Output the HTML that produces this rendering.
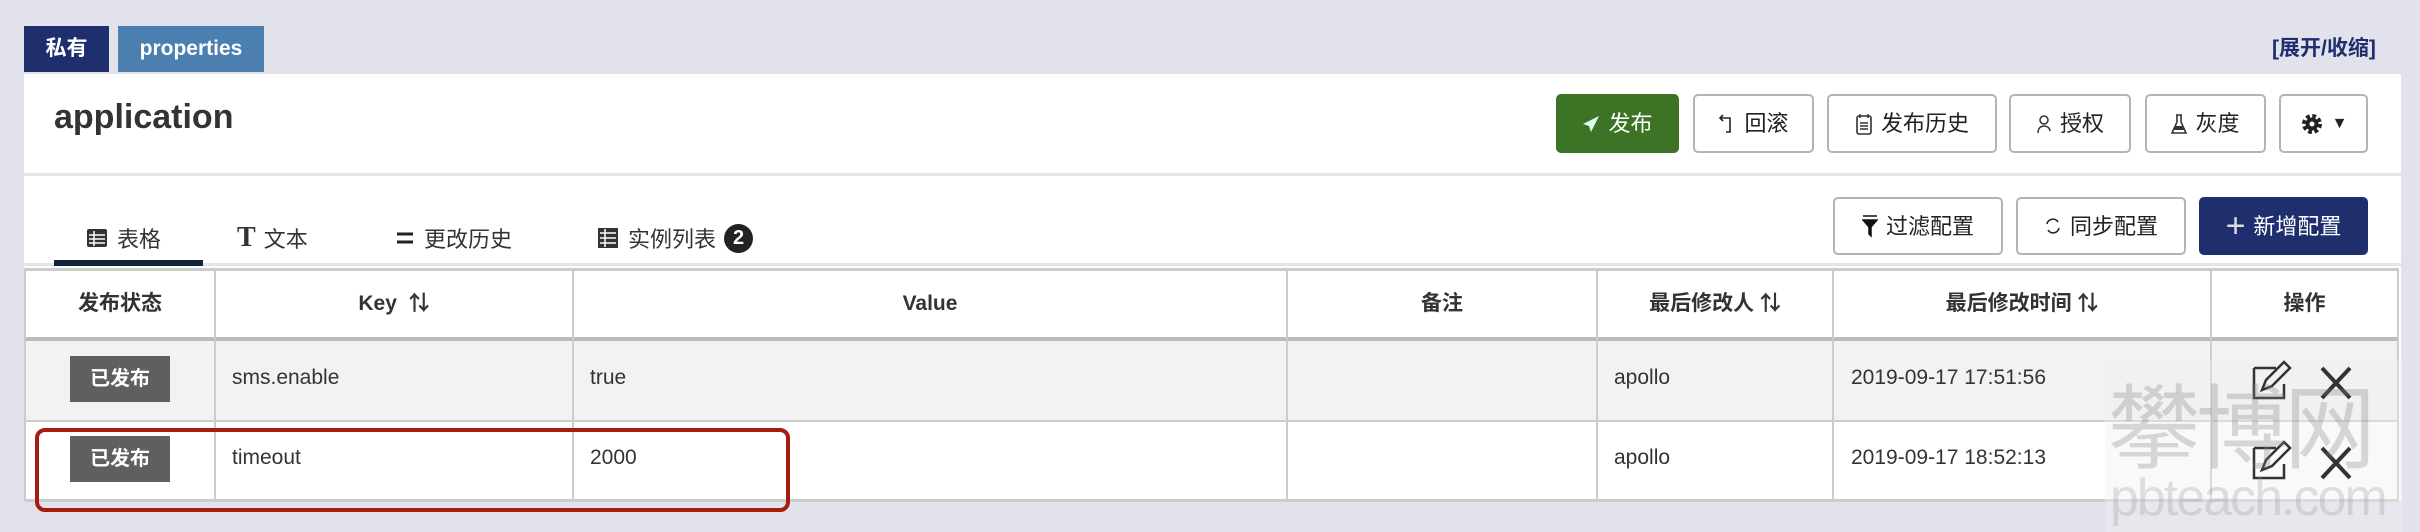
<!DOCTYPE html>
<html><head><meta charset="utf-8"><style>
*{box-sizing:border-box;margin:0;padding:0}
body{width:2420px;height:532px;background:#e1e2ec;font-family:"Liberation Sans","Noto Sans CJK SC",sans-serif;color:#333;position:relative;overflow:hidden}
.a{position:absolute}
.tag{top:26px;height:46px;color:#fff;font-size:21px;font-weight:bold;line-height:46px;text-align:center}
.panel{left:24px;top:74px;width:2377px;height:427px;background:#fff}
.btn{top:94px;height:59px;border:2px solid #b4b4b4;border-radius:5px;background:#fff;font-size:22px;line-height:55px;text-align:center;color:#222;display:flex;align-items:center;justify-content:center;gap:8px}
.btn2{top:197px;height:58px}
.hline{left:24px;width:2377px;height:3px;background:#e2e4ee}
.th{top:269px;height:70px;font-size:21px;font-weight:bold;line-height:70px;text-align:center;color:#333}
.v{width:2px;background:#ccc}
.cell{font-size:21px;color:#333}
.badge{left:70px;width:100px;height:46px;background:#5f5f5f;color:#fff;font-weight:bold;font-size:20px;line-height:46px;text-align:center}
.tab{top:222px;font-size:22px;color:#333;display:flex;align-items:center;gap:8px}
</style></head><body>
<div class="a tag" style="left:24px;width:85px;background:#1f2f6e">私有</div>
<div class="a tag" style="left:118px;width:146px;background:#4a7fb0">properties</div>
<div class="a" style="left:2272px;top:32px;font-size:21px;font-weight:bold;color:#1f2f6e">[展开/收缩]</div>

<div class="a panel"></div>
<div class="a" style="left:54px;top:98px;font-size:34px;font-weight:bold;color:#333">application</div>
<div class="a hline" style="top:173px"></div>
<div class="a hline" style="top:263px"></div>

<div class="a btn" style="left:1556px;width:123px;background:#3c7325;border-color:#3c7325;color:#fff">
<svg width="18" height="18" viewBox="0 0 18 18"><path d="M17 1L1 9l6 2 2 6z" fill="#dfe"/></svg>发布</div>
<div class="a btn" style="left:1693px;width:121px"><svg width="18" height="24" viewBox="0 0 18 24"><path d="M5 3L2 6l3 3M2 6h10v14H8" fill="none" stroke="#223" stroke-width="1.6"/></svg>回滚</div>
<div class="a btn" style="left:1827px;width:170px"><svg width="18" height="24" viewBox="0 0 18 24"><rect x="2" y="4" width="14" height="18" rx="2" fill="none" stroke="#333" stroke-width="1.6"/><path d="M5 2v4M13 2v4M5 11h8M5 14h8M5 17h8" stroke="#333" stroke-width="1.5"/></svg>发布历史</div>
<div class="a btn" style="left:2009px;width:122px"><svg width="16" height="20" viewBox="0 0 16 20"><circle cx="8" cy="6" r="4" fill="none" stroke="#333" stroke-width="1.5"/><path d="M2 19c0-5 3-7 6-7s6 2 6 5" fill="none" stroke="#333" stroke-width="1.5"/></svg>授权</div>
<div class="a btn" style="left:2145px;width:121px"><svg width="16" height="22" viewBox="0 0 16 22"><path d="M5 2h6M6 2v7L1 20h14L10 9V2" fill="none" stroke="#333" stroke-width="1.6"/><path d="M3 17h10l-2-4H5z" fill="#333"/></svg>灰度</div>
<div class="a btn" style="left:2279px;width:89px;font-size:16px"><svg width="24" height="24" viewBox="0 0 24 24"><circle cx="12" cy="12" r="7.5" fill="none" stroke="#222" stroke-width="5" stroke-dasharray="3.5 2.4"/><circle cx="12" cy="12" r="6.5" fill="#222"/><circle cx="12" cy="12" r="2.5" fill="#fff"/></svg>▼</div>

<div class="a tab" style="left:85px"><svg width="24" height="24" viewBox="0 0 24 24"><rect x="2" y="3" width="20" height="18" rx="2" fill="#333"/><path d="M4 9h16M4 13h16M4 17h16M9 5v15" stroke="#fff" stroke-width="1.5"/></svg>表格</div>
<div class="a" style="left:54px;top:260px;width:149px;height:6px;background:#14233c"></div>
<div class="a tab" style="left:237px"><span style="font-family:'Liberation Serif',serif;font-weight:bold;font-size:28px">T</span>文本</div>
<div class="a tab" style="left:394px"><svg width="22" height="20" viewBox="0 0 22 20"><path d="M3 6h16M3 14h16" stroke="#222" stroke-width="3"/></svg>更改历史</div>
<div class="a tab" style="left:596px"><svg width="24" height="24" viewBox="0 0 24 24"><rect x="2" y="2" width="20" height="20" fill="#333"/><path d="M4 7h16M4 12h16M4 17h16M9 3v18" stroke="#fff" stroke-width="1.5"/></svg>实例列表<span style="display:inline-block;width:29px;height:29px;border-radius:50%;background:#222;color:#fff;font-weight:bold;font-size:20px;line-height:29px;text-align:center">2</span></div>

<div class="a btn btn2" style="left:1833px;width:170px"><svg width="16" height="24" viewBox="0 0 16 24"><path d="M1 2h14M1 6h14L9 13v9l-2-2v-7z" stroke="#111" stroke-width="1.5" fill="#111"/></svg>过滤配置</div>
<div class="a btn btn2" style="left:2016px;width:170px"><svg width="18" height="22" viewBox="0 0 18 22"><path d="M3 9a6 6 0 0 1 11-2M15 13a6 6 0 0 1-11 2" fill="none" stroke="#222" stroke-width="1.6"/></svg>同步配置</div>
<div class="a btn btn2" style="left:2199px;width:169px;background:#1f2f6e;border-color:#1f2f6e;color:#fff"><span style="font-size:34px;font-weight:normal;line-height:30px;color:#ddd">+</span>新增配置</div>

<div class="a" style="left:25px;top:268px;width:2374px;height:3px;background:#ccc"></div>
<div class="a" style="left:25px;top:337px;width:2374px;height:4px;background:#bbb"></div>
<div class="a" style="left:25px;top:341px;width:2374px;height:80px;background:#f2f2f2"></div>
<div class="a" style="left:25px;top:420px;width:2374px;height:2px;background:#ccc"></div>
<div class="a" style="left:25px;top:499px;width:2374px;height:3px;background:#ccc"></div>
<div class="a v" style="left:24px;top:268px;height:233px"></div>
<div class="a v" style="left:214px;top:268px;height:233px"></div>
<div class="a v" style="left:572px;top:268px;height:233px"></div>
<div class="a v" style="left:1286px;top:268px;height:233px"></div>
<div class="a v" style="left:1596px;top:268px;height:233px"></div>
<div class="a v" style="left:1832px;top:268px;height:233px"></div>
<div class="a v" style="left:2210px;top:268px;height:233px"></div>
<div class="a v" style="left:2397px;top:268px;height:233px"></div>

<div class="a th" style="left:25px;width:190px">发布状态</div>
<div class="a th" style="left:215px;width:358px">Key&nbsp; ⇅</div>
<div class="a th" style="left:573px;width:714px">Value</div>
<div class="a th" style="left:1287px;width:310px">备注</div>
<div class="a th" style="left:1597px;width:236px">最后修改人 ⇅</div>
<div class="a th" style="left:1833px;width:378px">最后修改时间 ⇅</div>
<div class="a th" style="left:2211px;width:187px">操作</div>

<div class="a badge" style="top:356px">已发布</div>
<div class="a badge" style="top:436px">已发布</div>
<div class="a cell" style="left:232px;top:366px">sms.enable</div>
<div class="a cell" style="left:590px;top:366px">true</div>
<div class="a cell" style="left:1614px;top:366px">apollo</div>
<div class="a cell" style="left:1851px;top:366px">2019-09-17 17:51:56</div>
<div class="a cell" style="left:232px;top:446px">timeout</div>
<div class="a cell" style="left:590px;top:446px">2000</div>
<div class="a cell" style="left:1614px;top:446px">apollo</div>
<div class="a cell" style="left:1851px;top:446px">2019-09-17 18:52:13</div>

<div class="a" style="left:2105px;top:360px;width:298px;height:172px;background:rgba(240,240,240,.4)"></div>
<svg class="a" style="left:2250px;top:360px" width="110" height="120" viewBox="0 0 110 120">
<g fill="none" stroke="#333" stroke-width="2.5"><path d="M4 8h22M4 8v30h30V24"/><path d="M12 30l4-10 18-18 6 6-18 18z"/><path d="M72 8l28 30M100 8L72 38" stroke-width="4"/>
<path d="M4 88h22M4 88v30h30V104"/><path d="M12 110l4-10 18-18 6 6-18 18z"/><path d="M72 88l28 30M100 88L72 118" stroke-width="4"/></g></svg>
<div class="a" style="left:2108px;top:355px;font-size:92px;color:rgba(130,130,130,.3);letter-spacing:-4px">攀博网</div>
<div class="a" style="left:2110px;top:468px;font-size:52px;color:rgba(150,150,150,.28);letter-spacing:-2px">pbteach.com</div>

<div class="a" style="left:35px;top:428px;width:755px;height:84px;border:4px solid #a51d0d;border-radius:10px"></div>
</body></html>
